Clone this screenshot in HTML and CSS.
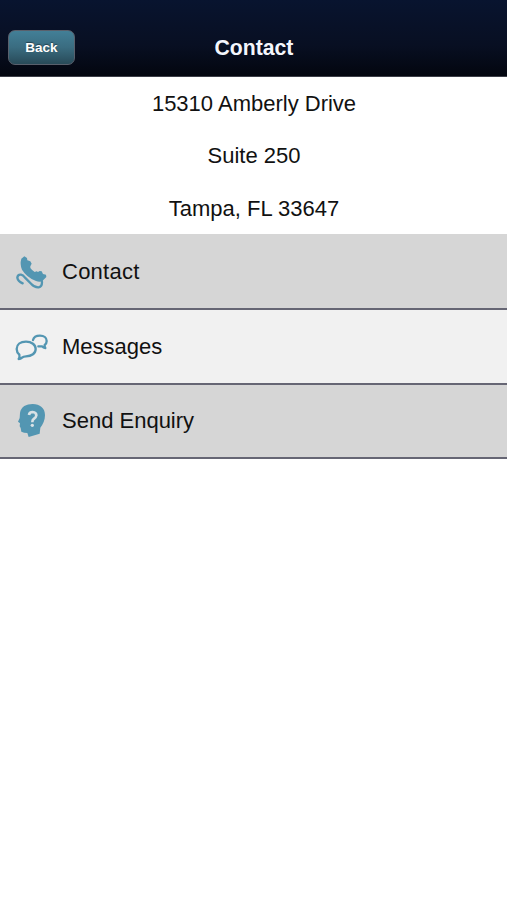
FILE: index.html
```html
<!DOCTYPE html>
<html lang="en">
<head>
<meta charset="utf-8">
<meta name="viewport" content="width=device-width, initial-scale=1">
<title>Contact</title>
<link rel="stylesheet" href="styles.css">
</head>
<body>
<header class="navbar">
  <button class="back" type="button">Back</button>
  <h1 class="title">Contact</h1>
</header>
<main>
  <address class="address">
    <p>15310 Amberly Drive</p>
    <p>Suite 250</p>
    <p>Tampa, FL 33647</p>
  </address>
  <nav class="menu">
    <a class="row first">
      <svg class="icon" viewBox="42 42 102 108" aria-hidden="true">
        <path class="fill" d="M64 56 L73 49 L81 54 L82 61 L91 64 L95 71 L91 79 L91 84 Q96 91 104 96 L110 94 L114 96 L119 93 L125 94 L129 102 L138 104 L139 111 L127 123 Q119 128 108 123 Q80 112 66 89 Q59 73 64 56Z"/>
        <path class="line" d="M68 130 Q54 124 52 113 Q53 103 63 104 Q69 105 75 113 L94 132 Q104 143 116 142 Q126 140 126 126 L124 119"/>
      </svg>
      <span class="wide">Contact</span>
    </a>
    <a class="row light">
      <svg class="icon" viewBox="42 42 102 108" aria-hidden="true">
        <path class="line" d="M78 124 Q70 124 66 128 Q62 132 56 132 Q60 127 58 119 Q50 112 50 102 C50 89 61 80 78 80 C95 80 107 89 107 102 C107 115 95 124 78 124Z"/>
        <path class="line" d="M99 75 C101 67 109 62 120 62 C132 62 140 69 140 78 Q140 86 134 90 Q133 95 136 99 Q130 99 126 94 L115 94"/>
      </svg>
      <span>Messages</span>
    </a>
    <a class="row last">
      <svg class="icon" viewBox="42 42 102 108" aria-hidden="true">
        <path class="fill" d="M60 72 C63 53 79 45 98 45 C120 45 135 57 135 78 C135 94 129 106 121 116 L119 134 L86 144 L82 132 Q72 132 64 128 L62 117 L59 112 L60 103 L54 98 L59 87Z"/>
        <path class="question" d="M87 78 Q88 69 98 69 Q109 70 109 79 Q108 86 101 90 Q97 92 97 100"/>
        <circle class="dot" cx="97" cy="109" r="5"/>
      </svg>
      <span>Send Enquiry</span>
    </a>
  </nav>
</main>
</body>
</html>
```
FILE: styles.css
```css
* { box-sizing: border-box; }

body {
  margin: 0;
  min-height: 100vh;
  background: #fff;
  color: #111;
  font-family: "Liberation Sans", Arial, sans-serif;
}

.navbar {
  display: grid;
  grid-template-columns: 67px 1fr 67px;
  align-items: center;
  height: 77px;
  padding: 19px 8px 0;
  background: linear-gradient(#08142f, #080f22 60%, #03060f);
  border-bottom: 1px solid #3c3e48;
  color: #f4f6fc;
}

.back {
  height: 35px;
  padding: 0 0 1px;
  border: 1px solid #59606c;
  border-radius: 7px;
  background: linear-gradient(#427f97, #3a6c80 50%, #284a58);
  color: #fff;
  font: bold 13.5px "Liberation Sans", Arial, sans-serif;
  text-shadow: 0 -1px 1px #24424f;
}

.title {
  margin: 0;
  padding-left: 1px;
  font-size: 21.2px;
  line-height: 26px;
  text-align: center;
}

.address {
  height: 157.4px;
  padding: 1px 0 0 1px;
  font-size: 22px;
  font-style: normal;
  text-align: center;
}

.address p {
  margin: 0;
  line-height: 52.4px;
}

.row {
  display: flex;
  align-items: center;
  gap: 14px;
  height: 75px;
  padding: 2px 0 0 14px;
  background: #d6d6d6;
  border-bottom: 2px solid #666674;
  font-size: 22px;
}

.row.first { height: 75.6px; }

.row.light { background: #f1f1f1; }

.row.last {
  height: 74px;
  padding-top: 1px;
}

.wide { letter-spacing: 0.25px; }

.icon {
  width: 34px;
  height: 36px;
}

.fill { fill: #5396b2; }

.line {
  fill: none;
  stroke: #5396b2;
  stroke-width: 7;
  stroke-linecap: round;
  stroke-linejoin: round;
}

.question {
  fill: none;
  stroke: #d9e2e6;
  stroke-width: 8;
}

.dot { fill: #d9e2e6; }
```
